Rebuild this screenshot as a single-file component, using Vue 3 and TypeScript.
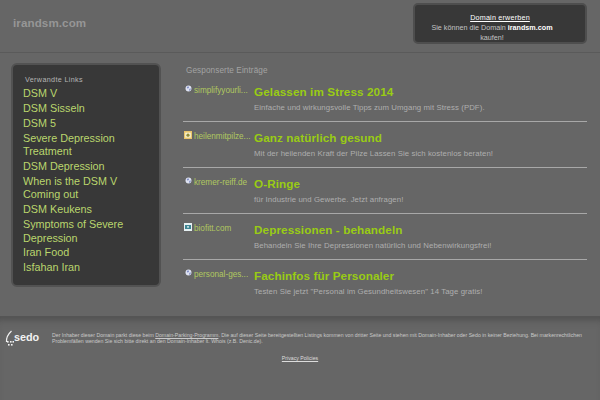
<script setup lang="ts">
const links: string[] = [
  'DSM V', 'DSM Sisseln', 'DSM 5', 'Severe Depression Treatment', 'DSM Depression',
  'When is the DSM V Coming out', 'DSM Keukens', 'Symptoms of Severe Depression', 'Iran Food', 'Isfahan Iran',
]
interface Ad { site: string; title: string; text: string; icon: string }
const ads: Ad[] = [
  { site: 'simplifyyourli...', title: 'Gelassen im Stress 2014', text: 'Einfache und wirkungsvolle Tipps zum Umgang mit Stress (PDF).', icon: 'globe' },
  { site: 'heilenmitpilze...', title: 'Ganz natürlich gesund', text: 'Mit der heilenden Kraft der Pilze Lassen Sie sich kostenlos beraten!', icon: 'fav' },
  { site: 'kremer-reiff.de', title: 'O-Ringe', text: 'für Industrie und Gewerbe. Jetzt anfragen!', icon: 'globe' },
  { site: 'biofitt.com', title: 'Depressionen - behandeln', text: 'Behandeln Sie Ihre Depressionen natürlich und Nebenwirkungsfrei!', icon: 'bio' },
  { site: 'personal-ges...', title: 'Fachinfos für Personaler', text: 'Testen Sie jetzt "Personal im Gesundheitswesen" 14 Tage gratis!', icon: 'globe' },
]
</script>

<template>
  <div class="page">
    <header class="top">
      <div class="brand">irandsm.com</div>
      <div class="buy">
        <a class="buy-link">Domain erwerben</a>
        <p>Sie können die Domain <b>irandsm.com</b> kaufen!</p>
      </div>
    </header>
    <main class="main">
      <aside class="panel">
        <h2>Verwandte Links</h2>
        <a v-for="l in links" :key="l" class="rel">{{ l }}</a>
      </aside>
      <section class="ads">
        <h2>Gesponserte Einträge</h2>
        <article v-for="a in ads" :key="a.title" class="ad">
          <div class="site">
            <svg v-if="a.icon === 'globe'" class="ico" viewBox="0 0 8 8">
              <circle cx="4" cy="4" r="3.4" fill="#dfe3f2" />
              <path d="M2 2.2 L4 1.4 L4.6 3 L3 4.2 Z M5 4.4 L6.8 4 L6 6.4 L4.6 6.6 Z" fill="#7f8cc4" />
            </svg>
            <svg v-else-if="a.icon === 'fav'" class="ico wide" viewBox="0 0 8 8">
              <rect width="8" height="8" fill="#e9c46a" />
              <rect x="1.2" y="1.6" width="5.6" height="5" fill="#f7f2cf" />
              <circle cx="4" cy="4.2" r="1.6" fill="#8f8a3a" />
            </svg>
            <svg v-else class="ico wide" viewBox="0 0 8 8">
              <rect width="8" height="8" fill="#e6f0f2" />
              <rect x="1" y="2" width="6" height="4" fill="#3f8794" />
              <rect x="3" y="3.2" width="2" height="1.4" fill="#dfeef0" />
            </svg>
            <span>{{ a.site }}</span>
          </div>
          <div class="body">
            <h3>{{ a.title }}</h3>
            <p>{{ a.text }}</p>
          </div>
        </article>
      </section>
    </main>
    <footer class="foot">
      <div class="sedo">
        <svg class="sedo-mark" viewBox="0 0 9 17">
          <path d="M6.5 1 Q1 6 1.5 12" fill="none" stroke="#f2f2f2" stroke-width="1.2" />
          <rect x="2" y="11" width="1.6" height="1.6" fill="#f2f2f2" />
          <rect x="5" y="11" width="1.6" height="1.6" fill="#f2f2f2" />
          <rect x="7.5" y="11" width="1.5" height="1.6" fill="#f2f2f2" />
          <rect x="3" y="14" width="1.6" height="1.6" fill="#f2f2f2" />
          <rect x="6" y="14" width="1.6" height="1.6" fill="#f2f2f2" />
        </svg>
        <span>sedo</span>
      </div>
      <div class="legal">
        <p>Der Inhaber dieser Domain parkt diese beim <a>Domain-Parking-Programm</a>. Die auf dieser Seite bereitgestellten Listings kommen von dritter Seite und stehen mit Domain-Inhaber oder Sedo in keiner Beziehung. Bei markenrechtlichen Problemfällen wenden Sie sich bitte direkt an den Domain-Inhaber lt. Whois (z.B. Denic.de).</p>
        <a class="privacy">Privacy Policies</a>
      </div>
    </footer>
  </div>
</template>

<style scoped>
.page {
  width: 600px;
  height: 400px;
  overflow: hidden;
  background: #666;
  font-family: "Liberation Sans", Arial, sans-serif;
  display: flex;
  flex-direction: column;
}
.top {
  height: 53px;
  flex: none;
  box-sizing: border-box;
  border-bottom: 1px solid #5a5a5a;
  display: flex;
  justify-content: space-between;
  align-items: flex-start;
  padding: 3px 13px 0 13px;
}
.brand {
  margin-top: 12px;
  font-size: 11.6px;
  line-height: 15px;
  font-weight: bold;
  letter-spacing: 0.1px;
  color: #969696;
}
.buy {
  width: 174px;
  height: 41px;
  box-sizing: border-box;
  background: #383838;
  border: 2px solid #4e4e4e;
  border-radius: 5px;
  text-align: center;
  color: #c4c4c4;
  font-size: 7.2px;
  line-height: 9.5px;
  padding: 8px 0 0;
}
.buy-link {
  display: block;
  color: #fff;
  text-decoration: underline;
  letter-spacing: 0.2px;
  margin-bottom: 0.5px;
}
.buy p { margin: 0 24px 0 8px; }
.buy b { color: #fff; }
.main {
  height: 263px;
  flex: none;
  box-sizing: border-box;
  display: flex;
  padding: 10px 13px 0 11px;
}
.panel {
  width: 150px;
  height: 224px;
  flex: none;
  box-sizing: border-box;
  background: #383838;
  border: 2px solid #525252;
  border-radius: 6px;
  padding: 10px 8px 0 10px;
  display: flex;
  flex-direction: column;
}
.panel h2 {
  margin: 0 0 2px 2px;
  font-size: 7.2px;
  line-height: 10px;
  font-weight: normal;
  letter-spacing: 0.35px;
  color: #b5b5b5;
}
.rel {
  display: block;
  color: #bad66d;
  font-size: 10.8px;
  line-height: 13.4px;
  padding: 0 0 1.5px 0;
}
.ads {
  flex: 1;
  margin-left: 22px;
  min-width: 0;
}
.ads h2 {
  margin: 3px 0 0 3px;
  font-size: 8.2px;
  line-height: 10px;
  font-weight: normal;
  letter-spacing: 0.1px;
  color: #a3a3a3;
}
.ad {
  height: 46px;
  box-sizing: border-box;
  display: flex;
  padding-top: 9px;
  border-bottom: 1px solid #a8a8a8;
}
.ad:last-child { border-bottom: 0; }
.site {
  width: 71px;
  flex: none;
  display: flex;
  align-items: flex-start;
  gap: 2px;
  padding-left: 2px;
  color: #b0c860;
  font-size: 8.2px;
  line-height: 11px;
  box-sizing: border-box;
}
.site span { white-space: nowrap; }
.ico { width: 7px; height: 7px; flex: none; margin-top: 0; }
.ico.wide { width: 8px; height: 8px; margin-left: -1px; }
.body h3 {
  margin: -1px 0 0;
  font-size: 11.7px;
  line-height: 16px;
  font-weight: bold;
  letter-spacing: 0.1px;
  color: #99cc14;
}
.body p {
  margin: 2px 0 0;
  font-size: 7.8px;
  line-height: 12px;
  letter-spacing: 0.08px;
  color: #aeaeae;
}
.foot {
  flex: 1;
  position: relative;
  display: flex;
  border-top: 1px solid #555;
  box-shadow: inset 0 8px 8px -6px #4c4c4c;
  padding: 13px 0 0 5px;
}
.sedo {
  width: 47px;
  flex: none;
  display: flex;
  align-items: flex-start;
  color: #f2f2f2;
  font-size: 10.8px;
  font-weight: bold;
  line-height: 13px;
}
.sedo-mark { width: 9px; height: 17px; flex: none; margin-top: 0; }
.sedo span { margin-top: 1px; margin-left: 0; }
.legal {
  width: 540px;
  flex: none;
  color: #c9c9c9;
  font-size: 5.2px;
  line-height: 6.4px;
  padding-top: 2px;
}
.legal p { margin: 0; }
.legal a { text-decoration: underline; }
.privacy {
  display: block;
  width: 496px;
  text-align: center;
  margin-top: 10px;
  color: #dcdcdc;
}
</style>
